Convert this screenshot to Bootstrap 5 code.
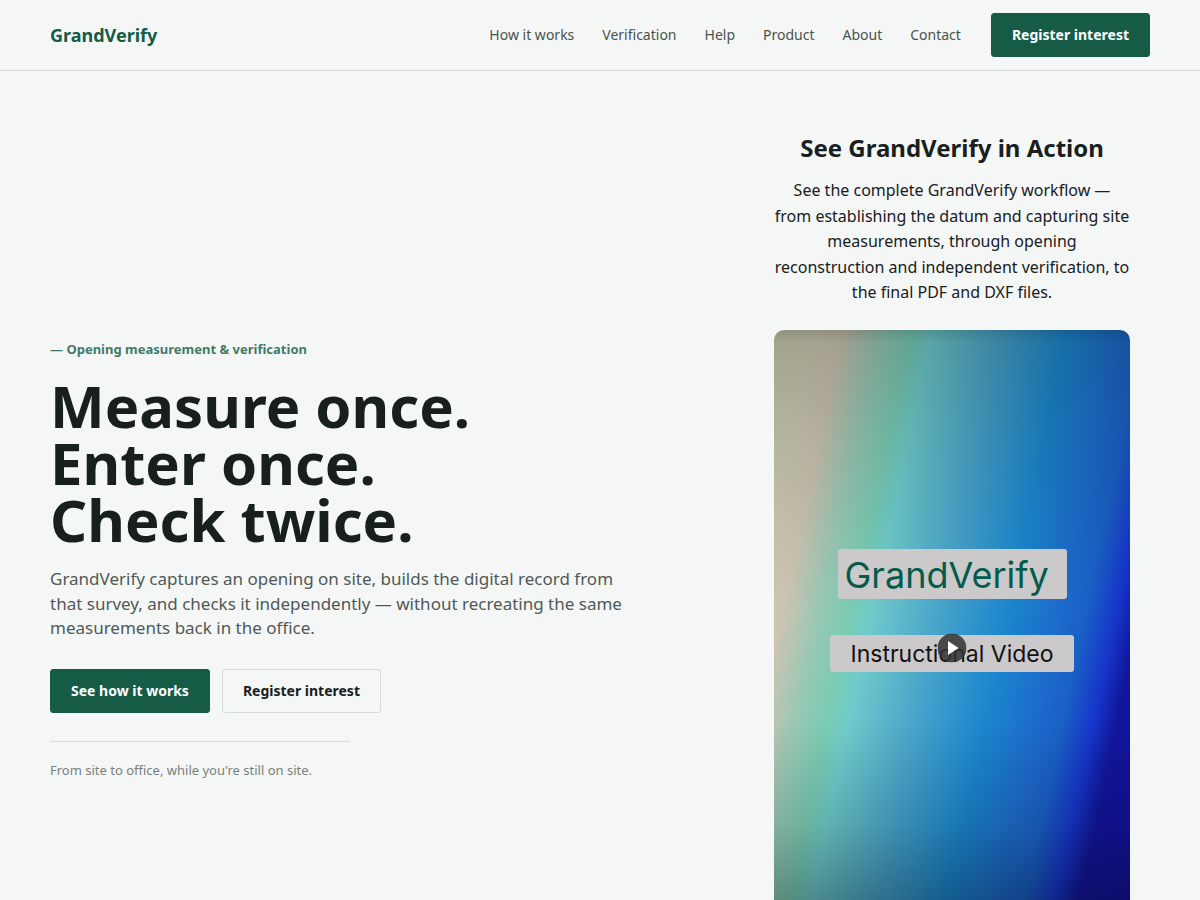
<!DOCTYPE html>
<html lang="en">
<head>
<meta charset="utf-8">
<meta name="viewport" content="width=device-width, initial-scale=1">
<title>GrandVerify</title>
<link href="https://cdn.jsdelivr.net/npm/bootstrap@5.3.0/dist/css/bootstrap.min.css" rel="stylesheet">
<style>
:root { --green: #155b46; --ink: #18201d; --line: #d5dbd8; }
body { background: #f5f7f6; color: var(--ink); font-family: "Noto Sans", sans-serif; font-size: 16px; }
.page-pad { padding-left: 50px; padding-right: 50px; }
.site-header { border-bottom: 1px solid var(--line); min-height: 71px; }
.brand { color: var(--green); font-size: 18px; font-weight: 700; text-decoration: none; }
.site-nav { gap: 28px; font-size: 14px; line-height: 22px; }
.site-nav a { color: #4a524f; text-decoration: none; }
.gv-btn { --bs-btn-font-size: 14px; --bs-btn-font-weight: 700; --bs-btn-padding-x: 20px; --bs-btn-padding-y: 0;
  --bs-btn-border-radius: 3px; min-height: 44px; line-height: 20px; --bs-btn-color: #fff; --bs-btn-bg: #155b46; --bs-btn-border-color: #155b46;
  --bs-btn-hover-color: #fff; --bs-btn-hover-bg: #0f4836; }
.gv-btn-line { --bs-btn-color: #18201d; --bs-btn-bg: transparent; --bs-btn-border-color: #d5dbd8; --bs-btn-hover-color: #18201d; --bs-btn-hover-bg: #e9edeb; }
.nav-cta { margin-left: 30px; }
.hero { display: grid; grid-template-columns: minmax(0, 1fr) 396px; column-gap: 64px; align-items: center; padding-top: 61px; padding-bottom: 60px; }
.hero-copy { padding-top: 24px; }
.eyebrow { color: #427a68; font-size: 13px; font-weight: 700; line-height: 20px; margin-bottom: 18px; }
.hero h1 { font-size: 58px; line-height: 57px; font-weight: 700; margin-bottom: 19px; }
.intro { color: #505956; font-size: 17px; line-height: 1.45; max-width: 580px; margin-bottom: 28px; }
.actions { gap: 12px; }
.tagline { border-top: 1px solid var(--line); width: 300px; max-width: 100%; margin-top: 28px; padding-top: 18px; color: #77807c; font-size: 13px; line-height: 20px; }
.demo { padding: 0 20px; text-align: center; }
.demo h2 { font-size: 24px; line-height: 32px; font-weight: 700; margin-bottom: 14px; }
.demo p { line-height: 1.6; margin-bottom: 24px; }
.video { aspect-ratio: 9 / 16; border-radius: 10px; overflow: hidden; padding-bottom: 72px;
  background:
    linear-gradient(180deg, rgba(0,0,0,.1), transparent 2%),
    linear-gradient(180deg, rgba(0,0,0,.2), rgba(0,0,0,.11) 17%, rgba(0,0,0,.03) 35%, transparent 45%, transparent 62%, rgba(0,0,0,.12) 78%, rgba(0,0,0,.32) 91%, rgba(0,0,0,.5)),
    linear-gradient(102deg, #cbcbae 0%, #cbcab0 8%, #cbc4b1 14%, #9bc8b4 21%, #79cbb4 28%, #6fcbca 32%, #48a3ca 46%, #1a86cd 60%, #1d6ccb 70%, #1a5fc5 76%, #1636cb 82%, #11159a 87%, #11119a 100%); }
.video-title, .video-sub { background: #cbc9ca; border-radius: 3px; font-family: Inter, sans-serif; position: relative; }
.video-title { width: 229px; height: 50px; line-height: 52px; font-size: 36px; color: #045b4c; padding-left: 7px; text-align: left; }
.video-sub { width: 244px; height: 37px; line-height: 39px; font-size: 23px; color: #111; margin-top: 36px; }
.play { position: absolute; left: 50%; top: 13px; transform: translate(-50%, -50%); width: 29px; height: 29px; border: 0; padding: 0; background: none; }
.play svg { display: block; }
</style>
</head>
<body>
<header class="site-header page-pad d-flex align-items-center">
  <a class="brand me-auto" href="#">GrandVerify</a>
  <nav class="site-nav d-flex align-items-center" aria-label="Main">
    <a href="#how">How it works</a>
    <a href="#verification">Verification</a>
    <a href="#help">Help</a>
    <a href="#product">Product</a>
    <a href="#about">About</a>
    <a href="#contact">Contact</a>
  </nav>
  <button type="button" class="btn gv-btn nav-cta">Register interest</button>
</header>
<main class="hero page-pad">
  <section class="hero-copy">
    <p class="eyebrow">— Opening measurement &amp; verification</p>
    <h1>Measure once.<br>Enter once.<br>Check twice.</h1>
    <p class="intro">GrandVerify captures an opening on site, builds the digital record from that survey, and checks it independently — without recreating the same measurements back in the office.</p>
    <div class="d-flex flex-wrap actions">
      <button type="button" class="btn gv-btn">See how it works</button>
      <button type="button" class="btn gv-btn gv-btn-line">Register interest</button>
    </div>
    <p class="tagline mb-0">From site to office, while you're still on site.</p>
  </section>
  <section class="demo">
    <h2>See GrandVerify in Action</h2>
    <p>See the complete GrandVerify workflow — from establishing the datum and capturing site measurements, through opening reconstruction and independent verification, to the final PDF and DXF files.</p>
    <div class="video d-flex flex-column align-items-center justify-content-center">
      <div class="video-title">GrandVerify</div>
      <div class="video-sub">Instructional Video
        <button type="button" class="play" aria-label="Play video">
          <svg width="29" height="29" viewBox="0 0 29 29"><circle cx="14.500" cy="14.500" r="14.500" fill="#333" fill-opacity=".85"/><path d="M10.500 7.500 21 14.500 10.500 21.500Z" fill="#fff"/></svg>
        </button>
      </div>
    </div>
  </section>
</main>
<script src="https://cdn.jsdelivr.net/npm/bootstrap@5.3.0/dist/js/bootstrap.bundle.min.js"></script>
</body>
</html>
